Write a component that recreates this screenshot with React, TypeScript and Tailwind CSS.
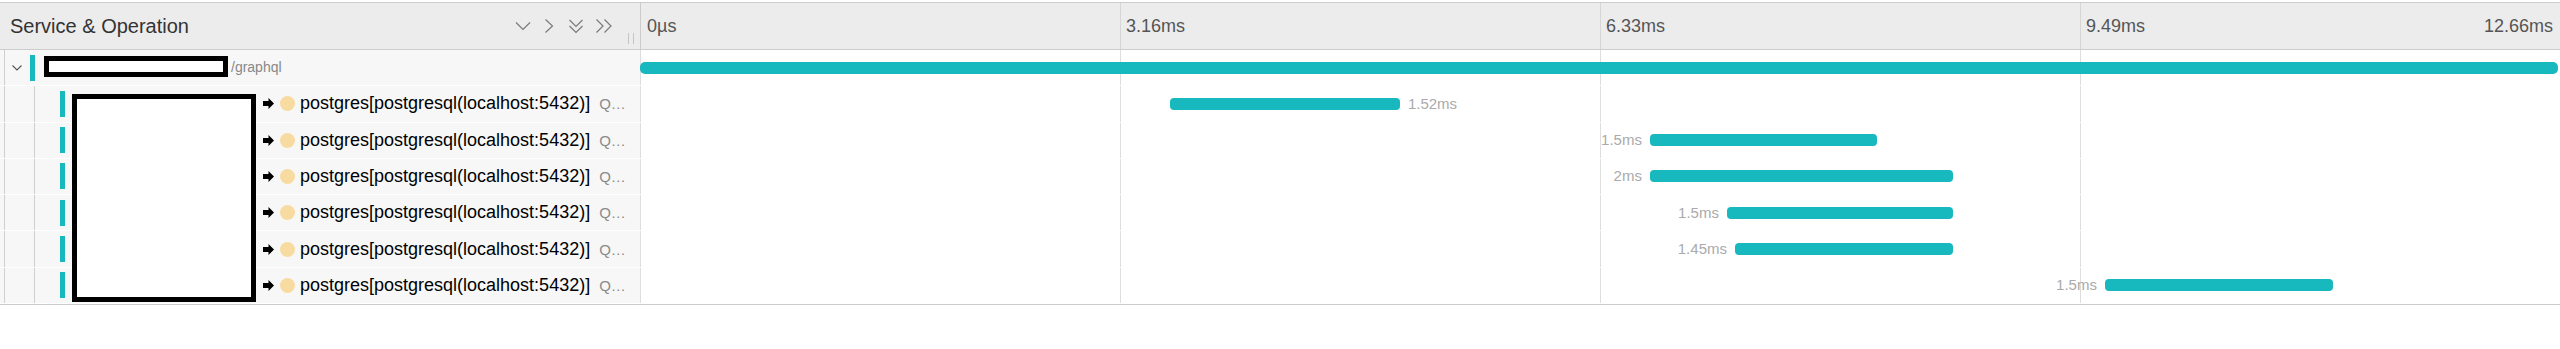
import React from "react"

type ChildSpan = {
    start: number
    width: number
    label: string
    side: "left" | "right"
}

// positions are % of the timeline (0 → 12.66ms)
const children: ChildSpan[] = [
    { start: 27.6, width: 11.98, label: "1.52ms", side: "right" },
    { start: 52.6, width: 11.82, label: "1.5ms", side: "left" },
    { start: 52.6, width: 15.78, label: "2ms", side: "left" },
    { start: 56.61, width: 11.77, label: "1.5ms", side: "left" },
    { start: 57.03, width: 11.35, label: "1.45ms", side: "left" },
    { start: 76.3, width: 11.875, label: "1.5ms", side: "left" },
]

const ticks = ["0µs", "3.16ms", "6.33ms", "9.49ms"]

function GridLines() {
    return (
        <div className="pointer-events-none absolute inset-0 grid grid-cols-4">
            {ticks.map((t) => (
                <div key={t} className="border-l border-[#dedede]" />
            ))}
        </div>
    )
}

function HeaderIcons() {
    return (
        <div className="ml-auto flex items-center text-[#7a7a7a]">
            <svg width="16" height="10" viewBox="0 0 16 10" fill="none" stroke="currentColor" strokeWidth="1.2">
                <polyline points="1,1.5 8,8.5 15,1.5" />
            </svg>
            <svg className="ml-[13px]" width="10" height="14" viewBox="0 0 10 14" fill="none" stroke="currentColor" strokeWidth="1.2">
                <polyline points="1.5,0.5 8.5,7 1.5,13.5" />
            </svg>
            <svg className="ml-[14px]" width="16" height="15" viewBox="0 0 16 15" fill="none" stroke="currentColor" strokeWidth="1.2">
                <polyline points="1.5,1 8,7.5 14.5,1" />
                <polyline points="1.5,7 8,13.5 14.5,7" />
            </svg>
            <svg className="ml-[11px]" width="18" height="14" viewBox="0 0 18 14" fill="none" stroke="currentColor" strokeWidth="1.2">
                <polyline points="1.5,0.5 8,7 1.5,13.5" />
                <polyline points="9.5,0.5 16,7 9.5,13.5" />
            </svg>
        </div>
    )
}

function Row({ left, children }: { left: React.ReactNode; children?: React.ReactNode }) {
    return (
        <div className="flex h-[36.29px] border-b border-white">
            <div className="flex w-[640px] shrink-0 items-center bg-[#f7f7f7]">{left}</div>
            <div className="relative flex-1">
                <GridLines />
                {children}
            </div>
        </div>
    )
}

function ChildLeft() {
    return (
        <>
            <div className="w-[5px] self-stretch border-r border-[#cfcfcf]" />
            <div className="w-[30px] self-stretch border-r border-[#cfcfcf]" />
            <div className="ml-[25px] h-[26px] w-[5px] shrink-0 bg-[#17b8be]" />
            {/* service name sits under the redaction box */}
            <div className="ml-[7px] w-[184px] shrink-0" />
            <svg className="ml-[7px] shrink-0" width="11" height="11" viewBox="0 0 11 11">
                <path d="M0 3 H5.5 V0 L11 5.5 L5.5 11 V8 H0 Z" fill="#000" />
            </svg>
            <span className="ml-[6px] h-[15px] w-[15px] shrink-0 rounded-full bg-[#f8dba0]" />
            <div className="ml-[5px] flex min-w-0 flex-1 items-baseline pr-[10px]">
                <span className="shrink-0 text-[18px] text-black">postgres[postgresql(localhost:5432)]</span>
                <span className="ml-[9px] min-w-0 truncate text-[15px] text-[#8a8a8a]">Query</span>
            </div>
        </>
    )
}

export default function App() {
    return (
        <div className="min-h-screen bg-white pt-[2px] font-['Liberation_Sans',Arial,sans-serif]">
            <div className="border-y border-[#cccccc]">
                {/* header */}
                <div className="flex h-[47px] border-b border-[#cccccc] bg-[#ececec]">
                    <div className="flex w-[640px] shrink-0 items-center pl-[10px] pr-[6px]">
                        <span className="text-[20px] text-[#333]">Service &amp; Operation</span>
                        <HeaderIcons />
                        <div className="mb-[5px] ml-[15px] h-[11px] w-[6px] self-end border-x border-[#c4c4c4]" />
                    </div>
                    <div className="grid flex-1 grid-cols-4 text-[18px] text-[#555]">
                        <div className="flex items-center border-l border-[#cccccc] pl-[6px]">0µs</div>
                        <div className="flex items-center border-l border-[#d6d6d6] pl-[5px]">3.16ms</div>
                        <div className="flex items-center border-l border-[#d6d6d6] pl-[5px]">6.33ms</div>
                        <div className="flex items-center justify-between border-l border-[#d6d6d6] pl-[5px] pr-[7px]">
                            <span>9.49ms</span>
                            <span>12.66ms</span>
                        </div>
                    </div>
                </div>

                {/* rows */}
                <div className="relative">
                    <Row
                        left={
                            <>
                                <div className="w-[5px] self-stretch border-r border-[#cfcfcf]" />
                                <svg className="ml-[7px] shrink-0" width="10" height="6" viewBox="0 0 10 6" fill="none" stroke="#555" strokeWidth="1.1">
                                    <polyline points="0.5,0.5 5,5 9.5,0.5" />
                                </svg>
                                <div className="ml-[8px] h-[26px] w-[5px] shrink-0 bg-[#17b8be]" />
                                <div className="mb-[2px] ml-[9px] h-[21px] w-[184px] shrink-0 border-[5px] border-black bg-white" />
                                <span className="ml-[3px] text-[14px] text-[#888]">/graphql</span>
                            </>
                        }
                    >
                        <div className="absolute left-0 top-1/2 h-[12px] w-[99.9%] -translate-y-1/2 rounded-[5px] bg-[#17b8be]" />
                    </Row>

                    {children.map((s, i) => (
                        <Row key={i} left={<ChildLeft />}>
                            <div
                                className="absolute top-1/2 h-[12px] -translate-y-1/2 rounded-[4px] bg-[#17b8be]"
                                style={{ left: `${s.start}%`, width: `${s.width}%` }}
                            />
                            <span
                                className="absolute top-1/2 -translate-y-1/2 whitespace-nowrap text-[15px] text-[#aaa]"
                                style={
                                    s.side === "right"
                                        ? { left: `calc(${s.start + s.width}% + 8px)` }
                                        : { right: `calc(${100 - s.start}% + 8px)` }
                                }
                            >
                                {s.label}
                            </span>
                        </Row>
                    ))}

                    {/* redaction box over the child service names */}
                    <div className="absolute left-[72px] top-[44px] h-[208px] w-[184px] border-[5px] border-black bg-white" />
                </div>
            </div>
        </div>
    )
}
